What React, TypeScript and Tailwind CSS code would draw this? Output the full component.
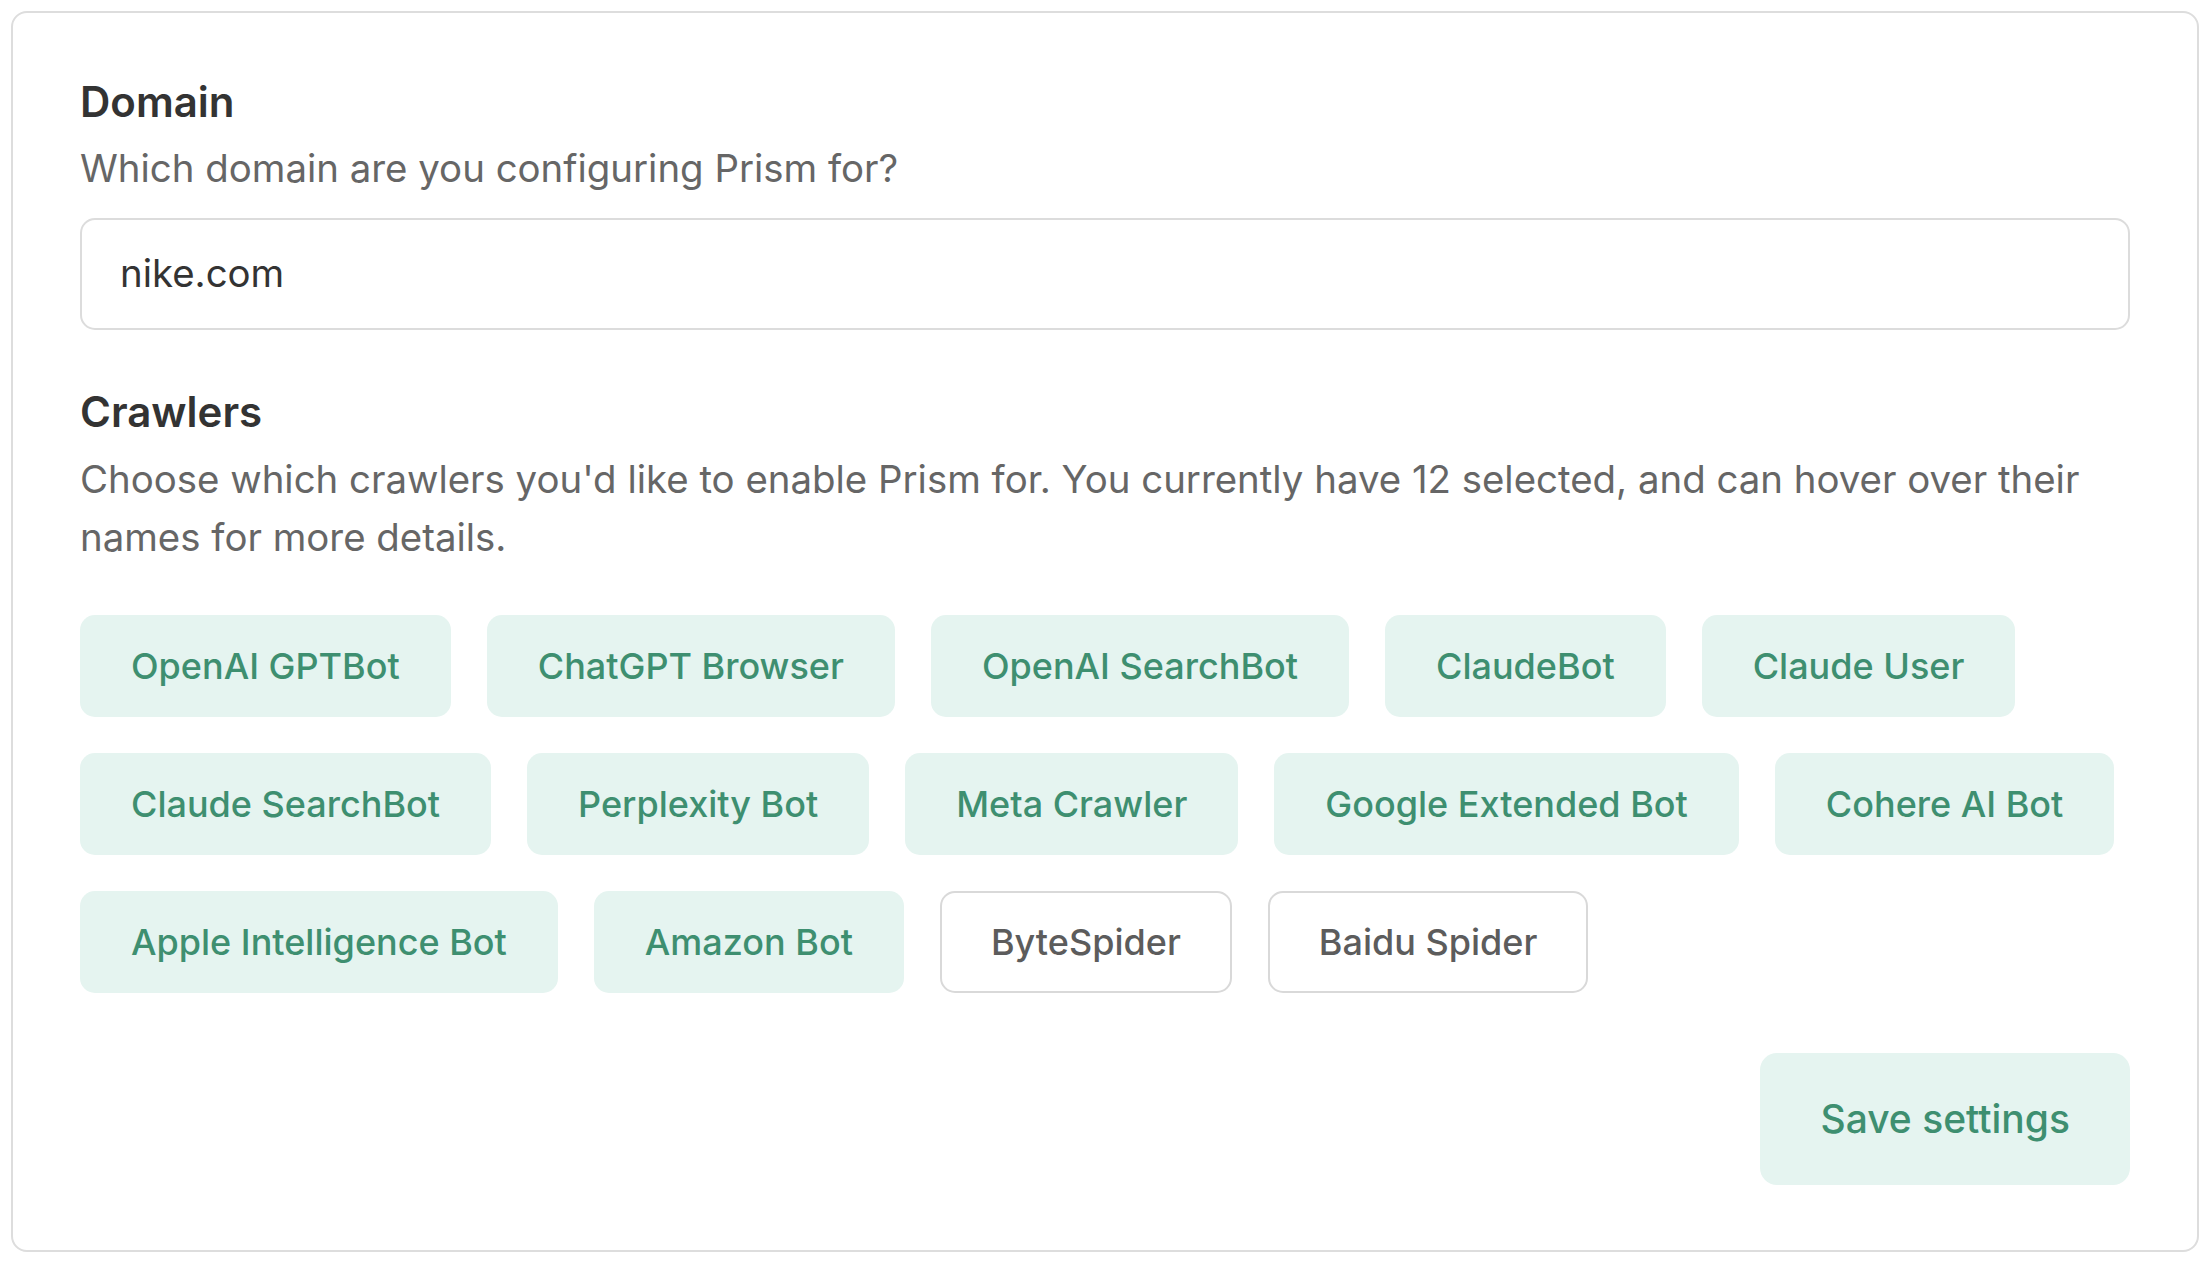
import React from "react";

type Chip = { name: string; on: boolean };

const rows: Chip[][] = [
  [
    { name: "OpenAI GPTBot", on: true },
    { name: "ChatGPT Browser", on: true },
    { name: "OpenAI SearchBot", on: true },
    { name: "ClaudeBot", on: true },
    { name: "Claude User", on: true },
  ],
  [
    { name: "Claude SearchBot", on: true },
    { name: "Perplexity Bot", on: true },
    { name: "Meta Crawler", on: true },
    { name: "Google Extended Bot", on: true },
    { name: "Cohere AI Bot", on: true },
  ],
  [
    { name: "Apple Intelligence Bot", on: true },
    { name: "Amazon Bot", on: true },
    { name: "ByteSpider", on: false },
    { name: "Baidu Spider", on: false },
  ],
];

function ChipButton({ chip }: { chip: Chip }) {
  return (
    <button
      type="button"
      className={
        chip.on
          ? "h-[102px] px-[49px] flex items-center rounded-[15px] border-[2px] border-transparent bg-[#e5f4f0] text-[#3e8f70] text-[36px] font-medium leading-none whitespace-nowrap"
          : "h-[102px] px-[49px] flex items-center rounded-[15px] border-[2px] border-[#d9d9d9] bg-white text-[#5c5c5c] text-[36px] font-medium leading-none whitespace-nowrap"
      }
    >
      {chip.name}
    </button>
  );
}

export default function App() {
  return (
    <div
      className="min-h-screen bg-white pl-[11px] pr-[13px] pt-[11px] pb-[14px]"
      style={{ fontFamily: "Inter, 'Noto Sans', sans-serif" }}
    >
      <div className="border-[2px] border-[#dddddd] rounded-[16px] px-[67px] pt-[61px] pb-[65px] bg-white">
        <h2 className="text-[42px] leading-[56px] font-semibold text-[#333333]">Domain</h2>
        <p className="mt-[9px] text-[38.4px] leading-[58.5px] text-[#666666]">
          Which domain are you configuring Prism for?
        </p>
        <div className="mt-[20px] h-[112px] border-[2px] border-[#dcdcdc] rounded-[15px] pl-[38px] flex items-center text-[38.4px] text-[#333333]">
          nike.com
        </div>

        <h2 className="mt-[54px] text-[42px] leading-[56px] font-semibold text-[#333333]">Crawlers</h2>
        <p className="mt-[10px] text-[38.4px] leading-[58.5px] text-[#666666]">
          Choose which crawlers you'd like to enable Prism for. You currently have 12 selected, and can hover over their names for more details.
        </p>

        <div className="mt-[48px] flex flex-col gap-[36px]">
          {rows.map((row, i) => (
            <div key={i} className="flex gap-[36px]">
              {row.map((c) => (
                <ChipButton key={c.name} chip={c} />
              ))}
            </div>
          ))}
        </div>

        <div className="mt-[60px] flex justify-end">
          <button
            type="button"
            className="h-[132px] px-[60px] rounded-[17px] bg-[#e5f4f0] text-[#3e8f70] text-[39px] font-medium leading-none whitespace-nowrap"
          >
            Save settings
          </button>
        </div>
      </div>
    </div>
  );
}
